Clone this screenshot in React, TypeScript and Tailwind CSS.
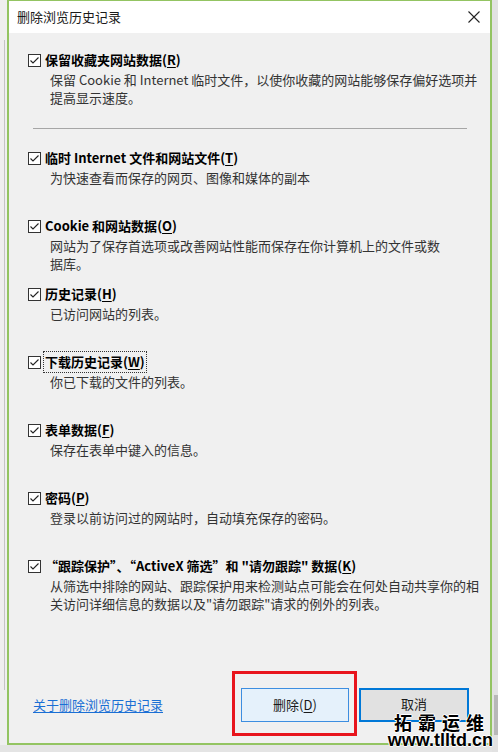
const font = { fontFamily: '"Noto Sans CJK SC", "Microsoft YaHei", sans-serif' };

type Item = {
  label: React.ReactNode;
  desc: string[];
  focused?: boolean;
};

function Key({ k }: { k: string }) {
  return (
    <>
      (<span className="underline underline-offset-2">{k}</span>)
    </>
  );
}

const items: Item[] = [
  {
    label: <>保留收藏夹网站数据<Key k="R" /></>,
    desc: ["保留 Cookie 和 Internet 临时文件，以使你收藏的网站能够保存偏好选项并", "提高显示速度。"],
  },
  {
    label: <>临时 Internet 文件和网站文件<Key k="T" /></>,
    desc: ["为快速查看而保存的网页、图像和媒体的副本"],
  },
  {
    label: <>Cookie 和网站数据<Key k="O" /></>,
    desc: ["网站为了保存首选项或改善网站性能而保存在你计算机上的文件或数", "据库。"],
  },
  {
    label: <>历史记录<Key k="H" /></>,
    desc: ["已访问网站的列表。"],
  },
  {
    label: <>下载历史记录<Key k="W" /></>,
    desc: ["你已下载的文件的列表。"],
    focused: true,
  },
  {
    label: <>表单数据<Key k="F" /></>,
    desc: ["保存在表单中键入的信息。"],
  },
  {
    label: <>密码<Key k="P" /></>,
    desc: ["登录以前访问过的网站时，自动填充保存的密码。"],
  },
  {
    label: <>“跟踪保护”、“ActiveX 筛选”和 "请勿跟踪" 数据<Key k="K" /></>,
    desc: ["从筛选中排除的网站、跟踪保护用来检测站点可能会在何处自动共享你的相", "关访问详细信息的数据以及\"请勿跟踪\"请求的例外的列表。"],
  },
];

function CheckBox() {
  return (
    <span className="mt-[4px] flex h-[13px] w-[13px] shrink-0 items-center justify-center border border-[#333] bg-white">
      <svg width="11" height="11" viewBox="0 0 11 11">
        <path d="M1.5 5.5 L4 8 L9.5 2.5" fill="none" stroke="#222" strokeWidth="1.1" />
      </svg>
    </span>
  );
}

function Option({ item, className }: { item: Item; className: string }) {
  return (
    <div className={className}>
      <div className="flex">
        <CheckBox />
        <span
          className={
            "ml-[3px] h-[20px] whitespace-nowrap px-px text-[13px] font-bold leading-[20px] text-black " +
            (item.focused ? "outline outline-1 outline-dotted outline-[#333]" : "")
          }
        >
          {item.label}
        </span>
      </div>
      <div className="ml-[22px] mt-[1px] text-[13px] leading-[18px] text-[#333]">
        {item.desc.map((d) => (
          <div key={d} className="whitespace-nowrap">
            {d}
          </div>
        ))}
      </div>
    </div>
  );
}

export default function App() {
  return (
    <div className="relative flex h-[752px] w-[498px] overflow-hidden bg-[#e4e4e4]" style={font}>
      <div className="flex h-[745px] w-[7px] shrink-0 bg-[#efefef]">
        <div className="ml-[4px] mt-[40px] h-[650px] w-px bg-[#c4c4c4]" />
      </div>

      <div className="flex h-[745px] w-[485px] shrink-0 flex-col border-2 border-t border-[#93c462] bg-[#f0f0f0]">
        <div className="flex h-[32px] shrink-0 items-center justify-between bg-white pl-[8px] pr-[10px]">
          <span className="text-[13px] text-[#1a1a1a]">删除浏览历史记录</span>
          <svg width="12" height="12" viewBox="0 0 12 12">
            <path d="M0.5 0.5 L11.5 11.5 M11.5 0.5 L0.5 11.5" stroke="#222" strokeWidth="1.1" />
          </svg>
        </div>

        <div className="flex flex-col pl-[19px]">
          <Option item={items[0]} className="mt-[17px] h-[78px]" />
          <div className="ml-[5px] h-px w-[434px] bg-[#a6a6a6]" />
          <div className="mt-[19px]">
            {items.slice(1).map((it, i) => (
              <Option key={i} item={it} className="h-[68px]" />
            ))}
          </div>
        </div>

        <div className="mt-[64px] flex items-center">
          <a className="ml-[24px] text-[13px] leading-[18px] text-[#1a6fd4] underline underline-offset-2">
            关于删除浏览历史记录
          </a>
          <div className="ml-auto mr-[21px] flex gap-[10px]">
            <button className="flex h-[34px] w-[108px] items-center justify-center border border-[#3d8ee0] bg-[#e5f1fb] text-[13px] leading-[16px] text-[#1a1a1a]">
              删除(<span className="underline underline-offset-2">D</span>)
            </button>
            <button className="flex h-[34px] w-[110px] items-center justify-center border-2 border-[#0078d7] bg-[#e1e1e1] pb-[3px] text-[13px] leading-[16px] text-[#1a1a1a]">
              取消
            </button>
          </div>
        </div>
      </div>

      <div className="flex flex-1 flex-col bg-[#e2e2e2]">
        <div className="ml-[2px] mt-[695px] h-[40px] w-[4px] bg-[#b8b8b8]" />
      </div>

      <div className="absolute left-[232px] top-[671px] h-[65px] w-[125px] border-[3px] border-[#e8141c]" />

      <div
        className="absolute right-[8px] top-[714px] text-[18px] font-bold leading-[17px] tracking-[6px] text-black"
        style={{ textShadow: "1px 0 #fff, -1px 0 #fff, 0 1px #fff, 0 -1px #fff" }}
      >
        拓霸运维
      </div>
      <div
        className="absolute right-[5px] top-[732px] text-[18px] font-bold leading-[17px] text-black"
        style={{ fontFamily: '"Liberation Sans", sans-serif', textShadow: "1px 0 #fff, -1px 0 #fff, 0 1px #fff, 0 -1px #fff" }}
      >
        www.tlltd.cn
      </div>
    </div>
  );
}
